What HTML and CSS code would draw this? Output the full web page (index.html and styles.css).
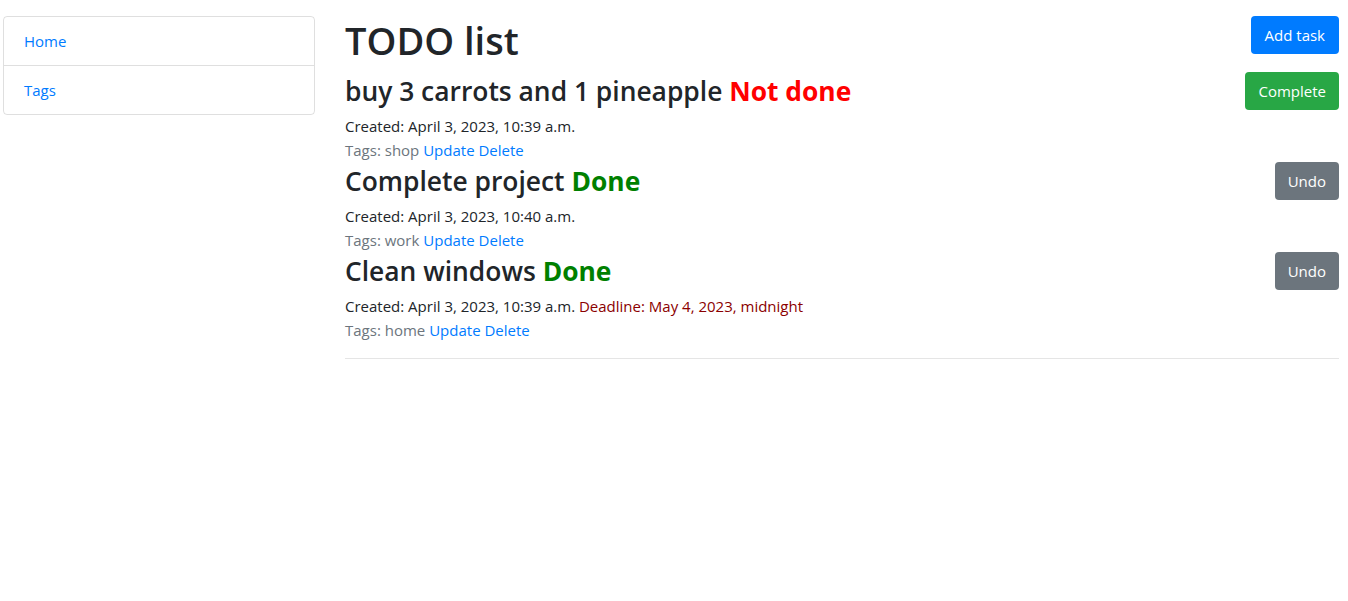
FILE: index.html
```html
<!DOCTYPE html>
<html lang="en">
<head>
<meta charset="utf-8">
<title>TODO list</title>
<link rel="stylesheet" href="styles.css">
</head>
<body>
<div class="page">
  <nav class="sidebar">
    <a class="nav-item" href="#">Home</a>
    <a class="nav-item" href="#">Tags</a>
  </nav>
  <main class="main">
    <div class="header">
      <h1 class="title">TODO list</h1>
      <a class="btn btn-primary" href="#">Add task</a>
    </div>
    <div class="task">
      <div class="task-row">
        <h3 class="task-title">buy 3 carrots and 1 pineapple <span class="status not-done">Not done</span></h3>
        <a class="btn btn-success btn-sm" href="#">Complete</a>
      </div>
      <div class="meta">Created: April 3, 2023, 10:39 a.m.</div>
      <div class="meta muted">Tags: shop <a class="link" href="#">Update</a> <a class="link" href="#">Delete</a></div>
    </div>
    <div class="task">
      <div class="task-row">
        <h3 class="task-title">Complete project <span class="status done">Done</span></h3>
        <a class="btn btn-secondary btn-sm" href="#">Undo</a>
      </div>
      <div class="meta">Created: April 3, 2023, 10:40 a.m.</div>
      <div class="meta muted">Tags: work <a class="link" href="#">Update</a> <a class="link" href="#">Delete</a></div>
    </div>
    <div class="task">
      <div class="task-row">
        <h3 class="task-title">Clean windows <span class="status done">Done</span></h3>
        <a class="btn btn-secondary btn-sm" href="#">Undo</a>
      </div>
      <div class="meta">Created: April 3, 2023, 10:39 a.m. <span class="deadline">Deadline: May 4, 2023, midnight</span></div>
      <div class="meta muted">Tags: home <a class="link" href="#">Update</a> <a class="link" href="#">Delete</a></div>
    </div>
    <hr class="divider">
  </main>
</div>
</body>
</html>
```

FILE: styles.css
```css
* { box-sizing: border-box; }
html, body { margin: 0; padding: 0; background: #fff; }
body {
  font-family: "Open Sans", "Noto Sans", sans-serif;
  font-size: 16px;
  line-height: 24px;
  color: #212529;
}
.page {
  display: flex;
  align-items: flex-start;
  gap: 30px;
  padding: 16px 9px 0 3px;
}
.sidebar {
  flex: none;
  width: 312px;
  display: flex;
  flex-direction: column;
  border: 1px solid rgba(0,0,0,.125);
  border-radius: 4px;
}
.nav-item {
  display: block;
  padding: 12px 20px;
  line-height: 24px;
  color: #007bff;
  text-decoration: none;
  font-size: 15px;
}
.nav-item + .nav-item { border-top: 1px solid rgba(0,0,0,.125); }
.main { flex: 1; min-width: 0; }
.header {
  display: flex;
  justify-content: space-between;
  align-items: flex-start;
  margin-bottom: 8px;
}
.title {
  margin: 0;
  font-size: 38px;
  line-height: 48px;
  font-weight: 600;
}
.btn {
  display: inline-block;
  color: #fff;
  text-decoration: none;
  padding: 7px 14px;
  font-size: 15px;
  line-height: 24px;
  border-radius: 4px;
  flex: none;
}
.btn-sm { padding: 7px 13px; font-size: 15px; }
.btn-primary { background: #007bff; }
.btn-success { background: #28a745; }
.btn-secondary { background: #6c757d; }
.task-row {
  display: flex;
  justify-content: space-between;
  align-items: center;
  min-height: 38px;
  margin-bottom: 4px;
}
.task-title {
  margin: 0;
  font-size: 26.4px;
  line-height: 32px;
  font-weight: 600;
}
.status { font-weight: 700; }
.not-done { color: #ff0000; }
.done { color: #008000; }
.meta { font-size: 15px; line-height: 24px; }
.muted { color: #6c757d; }
.link { color: #007bff; text-decoration: none; }
.deadline { color: #8b0000; }
.divider {
  margin: 16px 0 0;
  border: 0;
  border-top: 1px solid rgba(0,0,0,.1);
}
```
